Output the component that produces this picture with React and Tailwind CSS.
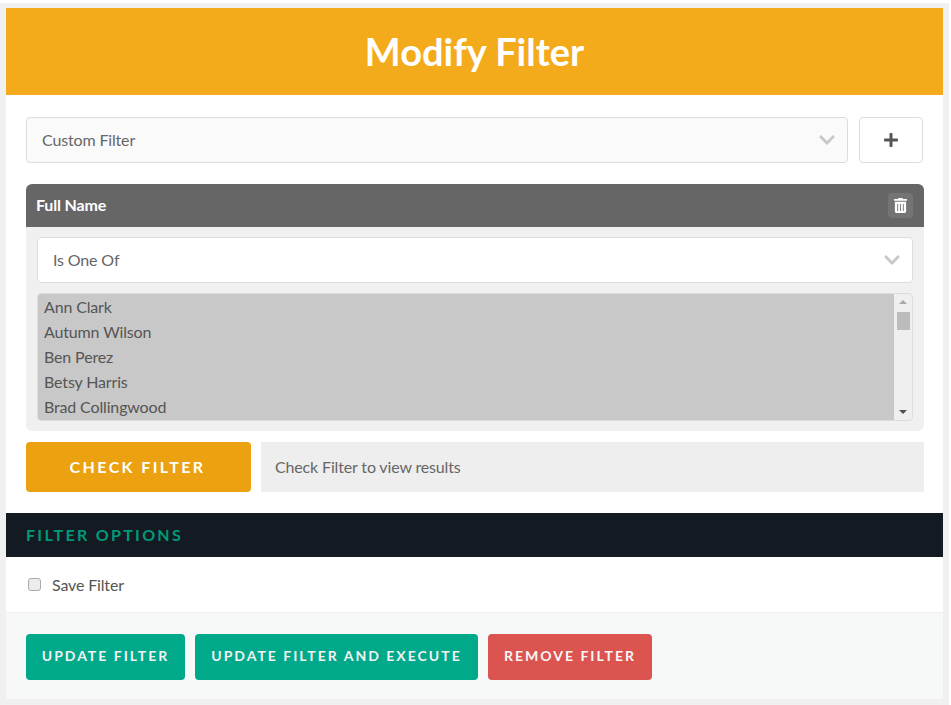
import { FaChevronDown, FaPlus, FaTrashAlt } from 'react-icons/fa';

const names = ['Ann Clark', 'Autumn Wilson', 'Ben Perez', 'Betsy Harris', 'Brad Collingwood'];

function SelectBox({ label, className }) {
  return (
    <div className={`flex h-[46px] items-center justify-between rounded border border-[#dcdcdc] pl-[15px] pr-[11px] text-base tracking-[-0.15px] text-[#666] ${className}`}>
      <span>{label}</span>
      <FaChevronDown className="text-[18px] text-[#c8c8c8]" />
    </div>
  );
}

function App() {
  return (
    <div className="h-[705px] w-[951px] overflow-hidden bg-white pt-[3px] font-['Lato','Liberation_Sans',sans-serif]">
      <div className="h-[702px] w-[949px] bg-[#f0f0f0] pb-[6px] pl-[6px] pr-[6px] pt-[5px]">
        <div className="flex h-[691px] flex-col bg-white">
          <div className="flex h-[87px] items-center justify-center bg-[#f4ab1b]">
            <h1 className="text-[38px] font-bold text-white">Modify Filter</h1>
          </div>

          <div className="px-[20px] pt-[22px]">
            <div className="flex gap-[11px]">
              <SelectBox label="Custom Filter" className="flex-1 bg-[#fafafa]" />
              <button className="flex h-[46px] w-[64px] items-center justify-center rounded border border-[#dcdcdc] bg-white text-[#555]">
                <FaPlus className="text-[16px]" />
              </button>
            </div>

            <div className="mt-[21px] w-[898px] overflow-hidden rounded-md bg-[#f0f0f0]">
              <div className="flex h-[43px] items-center justify-between bg-[#666] pl-[10px] pr-[11px]">
                <span className="pb-[2px] text-base font-bold tracking-[-0.15px] text-white">Full Name</span>
                <span className="flex h-[25px] w-[25px] items-center justify-center rounded bg-[#747474]">
                  <FaTrashAlt className="text-[15px] text-white" />
                </span>
              </div>
              <div className="px-[11px] pb-[10px] pt-[10px]">
                <SelectBox label="Is One Of" className="bg-white" />
                <div className="mt-[10px] flex h-[128px] overflow-hidden rounded-sm border border-[#dcdcdc] bg-[#efefef]">
                  <div className="flex-1 bg-[#c8c8c8] pl-[6px] text-base leading-[25px] tracking-[-0.15px] text-[#555]">
                    {names.map(name => (
                      <div key={name} className="h-[25px]">{name}</div>
                    ))}
                  </div>
                  <div className="relative flex w-[18px] flex-col items-center justify-between py-[6px]">
                    <span className="h-0 w-0 border-x-[4px] border-b-[4px] border-x-transparent border-b-[#a8a8a8]" />
                    <span className="absolute left-[3px] top-[18px] h-[18px] w-[13px] bg-[#bcbcbc]" />
                    <span className="h-0 w-0 border-x-[4px] border-t-[4px] border-x-transparent border-t-[#505050]" />
                  </div>
                </div>
              </div>
            </div>

            <div className="mt-[11px] flex w-[898px] gap-[10px]">
              <button className="h-[50px] w-[225px] rounded bg-[#eba110] pr-[2px] text-base font-bold tracking-[2.4px] text-white">
                CHECK FILTER
              </button>
              <div className="flex h-[50px] flex-1 items-center bg-[#eeeeee] pl-[14px] text-base tracking-[-0.15px] text-[#666]">
                Check Filter to view results
              </div>
            </div>
          </div>

          <div className="mt-[21px] flex h-[44px] items-center bg-[#131a21] pl-[20px] text-base font-bold tracking-[2.3px] text-[#00997a]">
            FILTER OPTIONS
          </div>

          <div className="flex h-[55px] items-center pl-[22px]">
            <input type="checkbox" className="h-[13px] w-[13px] appearance-none rounded-[3px] border border-[#aaaaaa] bg-[#ececec]" />
            <span className="ml-[11px] text-base tracking-[-0.15px] text-[#555]">Save Filter</span>
          </div>

          <div className="flex flex-1 gap-[10px] border-t border-[#eeeeee] bg-[#f7f9f9] pl-[20px] pt-[21px]">
            <button className="h-[46px] w-[159px] rounded bg-[#00a98a] pb-[2px] text-sm font-bold tracking-[2px] text-[#f2f2f2]">UPDATE FILTER</button>
            <button className="h-[46px] w-[283px] rounded bg-[#00a98a] pb-[2px] text-sm font-bold tracking-[2px] text-[#f2f2f2]">UPDATE FILTER AND EXECUTE</button>
            <button className="h-[46px] w-[164px] rounded bg-[#db5450] pb-[2px] text-sm font-bold tracking-[2px] text-[#f7f7f7]">REMOVE FILTER</button>
          </div>
        </div>
      </div>
    </div>
  );
}

export default App;
